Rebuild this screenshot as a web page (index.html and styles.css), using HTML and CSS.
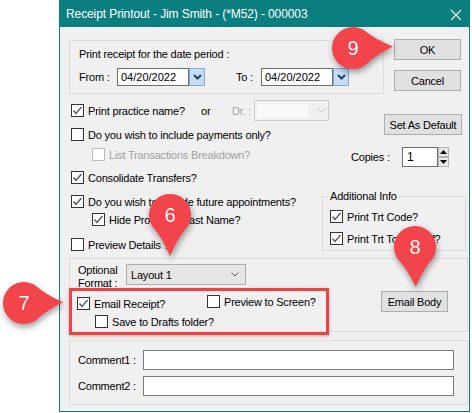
FILE: index.html
```html
<!DOCTYPE html>
<html>
<head>
<meta charset="utf-8">
<title>Receipt Printout</title>
<link rel="stylesheet" href="styles.css">
</head>
<body>
<div class="dialog">
  <div class="titlebar">
    <span class="title">Receipt Printout - Jim Smith - (*M52) - 000003</span>
    <svg class="close" width="12" height="12" viewBox="0 0 12 12"><path d="M1 1L11 11M11 1L1 11" stroke="#fff" stroke-width="1.1" fill="none"/></svg>
  </div>
  <div class="content">
    <div class="top-row">
      <div class="group date-group">
        <div class="date-label">Print receipt for the date period :</div>
        <div class="date-row">
          <span class="lbl-from">From :</span>
          <span class="datepick"><span class="datefield">04/20/2022</span><span class="dropbtn"><svg width="9" height="6" viewBox="0 0 9 6"><polyline points="1,1 4.5,4.5 8,1" fill="none" stroke="#2b416b" stroke-width="2"/></svg></span></span>
          <span class="lbl-to">To :</span>
          <span class="datepick"><span class="datefield">04/20/2022</span><span class="dropbtn"><svg width="9" height="6" viewBox="0 0 9 6"><polyline points="1,1 4.5,4.5 8,1" fill="none" stroke="#2b416b" stroke-width="2"/></svg></span></span>
        </div>
      </div>
      <div class="btn-col">
        <div class="btn">OK</div>
        <div class="btn">Cancel</div>
      </div>
    </div>

    <div class="mid">
      <div class="left-col">
        <div class="row r1">
          <span class="cb"><svg width="11" height="11" viewBox="0 0 11 11"><polyline points="1.5,5.5 4,8.5 9.5,2" fill="none" stroke="#555" stroke-width="1.3"/></svg></span>
          <span class="name-txt">Print practice name?</span>
          <span class="or-txt">or</span>
          <span class="dr-txt dis">Dr. :</span>
          <span class="dcombo"><span class="dfield"></span><svg width="9" height="5" viewBox="0 0 9 5"><polyline points="0.5,0.5 4.5,4.5 8.5,0.5" fill="none" stroke="#bdbdbd" stroke-width="1"/></svg></span>
        </div>
        <div class="row r2"><span class="cb"></span><span>Do you wish to include payments only?</span></div>
        <div class="row r3 indent"><span class="cb cb-dis"></span><span class="dis">List Transactions Breakdown?</span></div>
        <div class="row r4"><span class="cb"><svg width="11" height="11" viewBox="0 0 11 11"><polyline points="1.5,5.5 4,8.5 9.5,2" fill="none" stroke="#555" stroke-width="1.3"/></svg></span><span>Consolidate Transfers?</span></div>
        <div class="row r5"><span class="cb"><svg width="11" height="11" viewBox="0 0 11 11"><polyline points="1.5,5.5 4,8.5 9.5,2" fill="none" stroke="#555" stroke-width="1.3"/></svg></span><span>Do you wish to include future appointments?</span></div>
        <div class="row r6 indent"><span class="cb"><svg width="11" height="11" viewBox="0 0 11 11"><polyline points="1.5,5.5 4,8.5 9.5,2" fill="none" stroke="#555" stroke-width="1.3"/></svg></span><span>Hide Provider's Last Name?</span></div>
        <div class="row r7"><span class="cb"></span><span>Preview Details ?</span></div>
      </div>
      <div class="right-col">
        <div class="btn setdef">Set As Default</div>
        <div class="copies">
          <span class="copies-lbl">Copies :</span>
          <span class="copies-input">1</span>
          <span class="spinner">
            <span class="spin"><svg width="7" height="4" viewBox="0 0 7 4"><polygon points="0,4 3.5,0 7,4" fill="#000"/></svg></span>
            <span class="spin"><svg width="7" height="4" viewBox="0 0 7 4"><polygon points="0,0 7,0 3.5,4" fill="#000"/></svg></span>
          </span>
        </div>
        <div class="group addl">
          <div class="legend">Additional Info</div>
          <div class="row a1"><span class="cb"><svg width="11" height="11" viewBox="0 0 11 11"><polyline points="1.5,5.5 4,8.5 9.5,2" fill="none" stroke="#555" stroke-width="1.3"/></svg></span><span>Print Trt Code?</span></div>
          <div class="row a2"><span class="cb"><svg width="11" height="11" viewBox="0 0 11 11"><polyline points="1.5,5.5 4,8.5 9.5,2" fill="none" stroke="#555" stroke-width="1.3"/></svg></span><span>Print Trt Tooth/Surf?</span></div>
        </div>
      </div>
    </div>

    <div class="group optional">
      <div class="opt-top">
        <span class="opt-label">Optional<br>Format :</span>
        <span class="combo"><span>Layout 1</span><svg width="8" height="5" viewBox="0 0 8 5"><polyline points="0.5,0.5 4,4 7.5,0.5" fill="none" stroke="#5a5a5a" stroke-width="1"/></svg></span>
      </div>
      <div class="opt-bottom">
        <div class="redbox">
          <div class="red-row1">
            <div class="row email-item"><span class="cb"><svg width="11" height="11" viewBox="0 0 11 11"><polyline points="1.5,5.5 4,8.5 9.5,2" fill="none" stroke="#555" stroke-width="1.3"/></svg></span><span>Email Receipt?</span></div>
            <div class="row"><span class="cb"></span><span>Preview to Screen?</span></div>
          </div>
          <div class="row red-row2"><span class="cb"></span><span>Save to Drafts folder?</span></div>
        </div>
        <div class="btn emailbody">Email Body</div>
      </div>
    </div>

    <div class="group comments">
      <div class="crow"><span class="clbl">Comment1 :</span><span class="cinput"></span></div>
      <div class="crow"><span class="clbl">Comment2 :</span><span class="cinput"></span></div>
    </div>
  </div>
</div>

<svg class="marker m9" width="100" height="100" viewBox="-50 -50 100 100"><path transform="rotate(-2)" d="M40 0 Q22 -8 11 -17.9 A21 21 0 1 0 11 17.9 Q22 8 40 0 Z" fill="#f2444a"/><text x="0" y="7" text-anchor="middle" class="mnum">9</text></svg>
<svg class="marker m6" width="100" height="100" viewBox="-50 -50 100 100"><path transform="rotate(90)" d="M41 0 Q22 -8 11 -17.9 A21 21 0 1 0 11 17.9 Q22 8 41 0 Z" fill="#f2444a"/><text x="0" y="7" text-anchor="middle" class="mnum">6</text></svg>
<svg class="marker m7" width="100" height="100" viewBox="-50 -50 100 100"><path transform="rotate(-1)" d="M39 0 Q22 -8 11 -17.9 A21 21 0 1 0 11 17.9 Q22 8 39 0 Z" fill="#f2444a"/><text x="0" y="7" text-anchor="middle" class="mnum">7</text></svg>
<svg class="marker m8" width="100" height="100" viewBox="-50 -50 100 100"><path transform="rotate(89)" d="M40 0 Q22 -8 11 -17.9 A21 21 0 1 0 11 17.9 Q22 8 40 0 Z" fill="#f2444a"/><text x="0" y="7" text-anchor="middle" class="mnum">8</text></svg>
</body>
</html>
```
FILE: styles.css
```css
* { box-sizing: border-box; }
html, body { margin: 0; padding: 0; }
body {
  width: 472px;
  height: 413px;
  background: #fff;
  position: relative;
  overflow: hidden;
  font-family: "Liberation Sans", Arial, sans-serif;
  font-size: 11px;
  letter-spacing: -0.2px;
  color: #000;
}
.dialog {
  margin-left: 59px;
  width: 411px;
  height: 412px;
  background: #f0f0f0;
  border: 1px solid #0b7e80;
  border-top: none;
  display: flex;
  flex-direction: column;
}
.titlebar {
  height: 27px;
  background: #0b7e80;
  display: flex;
  align-items: center;
  justify-content: space-between;
  padding: 0 7px 0 6px;
  flex: none;
}
.title {
  color: #fff;
  font-size: 12px;
  letter-spacing: -0.1px;
  line-height: 26px;
  white-space: nowrap;
}
.close { margin-top: 3px; }
.content { flex: 1; }

.group { border: 1px solid #dcdcdc; }

.top-row { display: flex; margin-top: 12px; }
.date-group {
  margin: 1px 0 0 9px;
  width: 315px;
  height: 54px;
  padding: 6px 0 0 9px;
}
.date-label { line-height: 14px; height: 14px; white-space: nowrap; }
.date-row { display: flex; align-items: center; height: 18px; margin-top: 7px; }
.lbl-from { width: 38px; flex: none; }
.lbl-to { width: 25px; margin-left: 31px; flex: none; }
.datepick { display: flex; flex: none; }
.datefield {
  width: 72px;
  height: 18px;
  background: #fff;
  border: 1px solid #6e6e6e;
  padding-left: 3px;
  line-height: 16px;
  letter-spacing: 0;
}
.dropbtn {
  width: 16px;
  height: 18px;
  background: #c6dcf4;
  border: 1px solid #87a9d6;
  display: flex;
  align-items: center;
  justify-content: center;
}
.btn-col { display: flex; flex-direction: column; gap: 10px; margin-left: 10px; }
.btn {
  width: 67px;
  height: 21px;
  background: #e1e1e1;
  border: 1px solid #adadad;
  display: flex;
  align-items: center;
  justify-content: center;
  white-space: nowrap;
  flex: none;
}

.mid { display: flex; }
.left-col { width: 261px; padding-left: 11px; flex: none; }
.right-col { flex: 1; }
.row { display: flex; align-items: center; height: 13px; white-space: nowrap; }
.cb {
  width: 13px;
  height: 13px;
  border: 1px solid #333;
  background: #fff;
  flex: none;
  margin-right: 4px;
  display: flex;
  align-items: center;
  justify-content: center;
}
.cb-dis { border-color: #bcbcbc; }
.dis { color: #a0a0a0; }
.indent { margin-left: 21px; }
.r1 { height: 21px; margin-top: 6px; }
.r2 { margin-top: 7px; }
.r3 { margin-top: 7px; }
.r4 { margin-top: 10px; }
.r5 { margin-top: 11px; }
.r6 { margin-top: 5px; }
.r7 { margin-top: 12px; }
.name-txt { width: 113px; flex: none; }
.or-txt { width: 31px; flex: none; }
.dr-txt { width: 22px; flex: none; }
.dcombo {
  width: 75px;
  height: 21px;
  border: 1px solid #cccccc;
  background: #f0f0f0;
  display: flex;
  align-items: center;
  flex: none;
  padding-left: 2px;
}
.dfield { width: 51px; height: 14px; background: #f9f9f9; margin-right: 9px; }

.setdef { margin: 20px 0 0 63px; width: 78px; }
.copies { display: flex; align-items: center; height: 20px; margin-top: 12px; }
.copies-lbl { margin-left: 30px; width: 51px; flex: none; }
.copies-input {
  width: 36px;
  height: 20px;
  background: #fff;
  border: 1px solid #6e6e6e;
  padding-left: 4px;
  line-height: 18px;
  font-size: 12px;
  flex: none;
}
.spinner { display: flex; flex-direction: column; width: 11px; height: 20px; flex: none; }
.spin {
  height: 10px;
  background: #e8e8e8;
  border: 1px solid #b4b4b4;
  display: flex;
  align-items: center;
  justify-content: center;
}
.addl {
  margin: 29px 0 0 1px;
  width: 144px;
  height: 55px;
  padding-left: 7px;
}
.legend {
  width: max-content;
  margin: -7px 0 0 -1px;
  padding: 0 1px;
  background: #f0f0f0;
  line-height: 13px;
}
.a1 { margin-top: 7px; }
.a2 { margin-top: 9px; }

.optional {
  margin: 7px 0 0 9px;
  width: 399px;
  height: 74px;
  padding: 5px 0 0 8px;
}
.opt-top { display: flex; align-items: flex-start; height: 21px; }
.opt-label { width: 48px; line-height: 13px; flex: none; }
.combo {
  width: 120px;
  height: 21px;
  background: #e5e5e5;
  border: 1px solid #adadad;
  display: flex;
  align-items: center;
  justify-content: space-between;
  padding: 0 6px 0 4px;
  flex: none;
}
.opt-bottom { display: flex; align-items: flex-start; margin: 3px 0 0 -9px; }
.redbox {
  width: 260px;
  height: 47px;
  border: 3px solid #ef4343;
  padding: 4px 0 0 5px;
  box-shadow: 0 1px 3px rgba(0, 0, 0, 0.25);
  flex: none;
  position: relative;
}
.red-row1 { display: flex; align-items: flex-start; height: 14px; }
.email-item { width: 130px; margin-top: 2px; }
.red-row2 { margin-top: 6px; padding-left: 18px; }
.emailbody { margin: 3px 0 0 52px; }

.comments {
  margin: 8px 0 0 9px;
  width: 399px;
  height: 65px;
  padding: 9px 0 0 8px;
}
.crow { display: flex; align-items: center; height: 20px; }
.crow + .crow { margin-top: 6px; }
.clbl { width: 65px; flex: none; }
.cinput {
  width: 311px;
  height: 20px;
  background: #fff;
  border: 1px solid #7a7a7a;
  flex: none;
}

.marker {
  position: absolute;
  overflow: visible;
  filter: drop-shadow(1px 3px 3px rgba(0, 0, 0, 0.4));
}
.mnum {
  font-family: "Liberation Sans", Arial, sans-serif;
  font-size: 20px;
  fill: #fff;
  letter-spacing: 0;
}
.m9 { left: 303px; top: -2px; }
.m6 { left: 120px; top: 165px; }
.m7 { left: -26px; top: 253px; }
.m8 { left: 365px; top: 197px; }
```
